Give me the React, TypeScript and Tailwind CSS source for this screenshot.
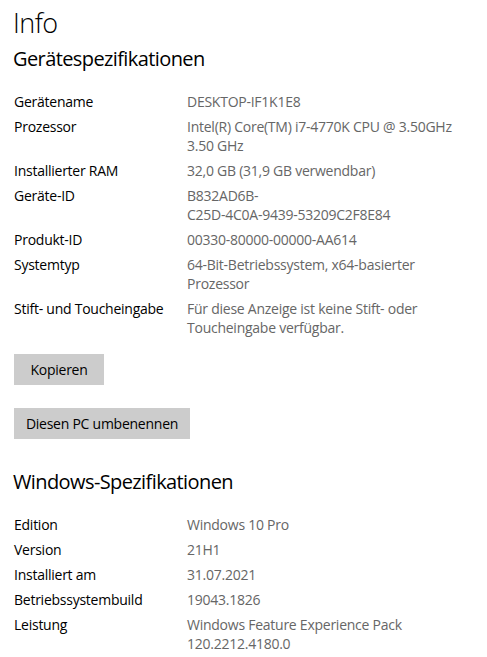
const DEVICE_SPECS: { label: string; lines: string[] }[] = [
  { label: "Gerätename", lines: ["DESKTOP-IF1K1E8"] },
  { label: "Prozessor", lines: ["Intel(R) Core(TM) i7-4770K CPU @ 3.50GHz", "3.50 GHz"] },
  { label: "Installierter RAM", lines: ["32,0 GB (31,9 GB verwendbar)"] },
  { label: "Geräte-ID", lines: ["B832AD6B-", "C25D-4C0A-9439-53209C2F8E84"] },
  { label: "Produkt-ID", lines: ["00330-80000-00000-AA614"] },
  { label: "Systemtyp", lines: ["64-Bit-Betriebssystem, x64-basierter", "Prozessor"] },
  { label: "Stift- und Toucheingabe", lines: ["Für diese Anzeige ist keine Stift- oder", "Toucheingabe verfügbar."] },
];

const WINDOWS_SPECS: { label: string; lines: string[] }[] = [
  { label: "Edition", lines: ["Windows 10 Pro"] },
  { label: "Version", lines: ["21H1"] },
  { label: "Installiert am", lines: ["31.07.2021"] },
  { label: "Betriebssystembuild", lines: ["19043.1826"] },
  { label: "Leistung", lines: ["Windows Feature Experience Pack", "120.2212.4180.0"] },
];

function SpecList({ rows }: { rows: { label: string; lines: string[] }[] }) {
  return (
    <div className="flex flex-col gap-[6px]">
      {rows.map((r) => (
        <div key={r.label} className="flex text-[14px] leading-[19px] tracking-[-0.25px]">
          <div className="w-[173px] shrink-0 text-black">{r.label}</div>
          <div className="flex flex-col text-[#666666] whitespace-nowrap">
            {r.lines.map((l) => (
              <span key={l}>{l}</span>
            ))}
          </div>
        </div>
      ))}
    </div>
  );
}

export default function App() {
  return (
    <div
      className="min-h-screen bg-white pl-[13px] pt-[5px] text-black"
      style={{ fontFamily: '"Open Sans", "Noto Sans", sans-serif' }}
    >
      <h1 className="text-[27px] font-light leading-[36px] tracking-[-0.5px]">Info</h1>
      <h2 className="mt-1 text-[20px] leading-[28px] tracking-[-0.6px]">Gerätespezifikationen</h2>

      <div className="mt-[19px] pl-px">
        <SpecList rows={DEVICE_SPECS} />

        {/* Actions */}
        <div className="mt-[17px] flex flex-col items-start gap-[23px]">
          <button className="h-[31px] w-[90px] bg-[#cccccc] text-[14px] tracking-[-0.25px] text-black">
            Kopieren
          </button>
          <button className="h-[31px] w-[176px] bg-[#cccccc] text-[14px] tracking-[-0.25px] text-black">
            Diesen PC umbenennen
          </button>
        </div>
      </div>

      <h2 className="mt-[29px] text-[20px] leading-[28px] tracking-[-0.6px]">Windows-Spezifikationen</h2>

      <div className="mt-[19px] pl-px">
        <SpecList rows={WINDOWS_SPECS} />
      </div>
    </div>
  );
}
